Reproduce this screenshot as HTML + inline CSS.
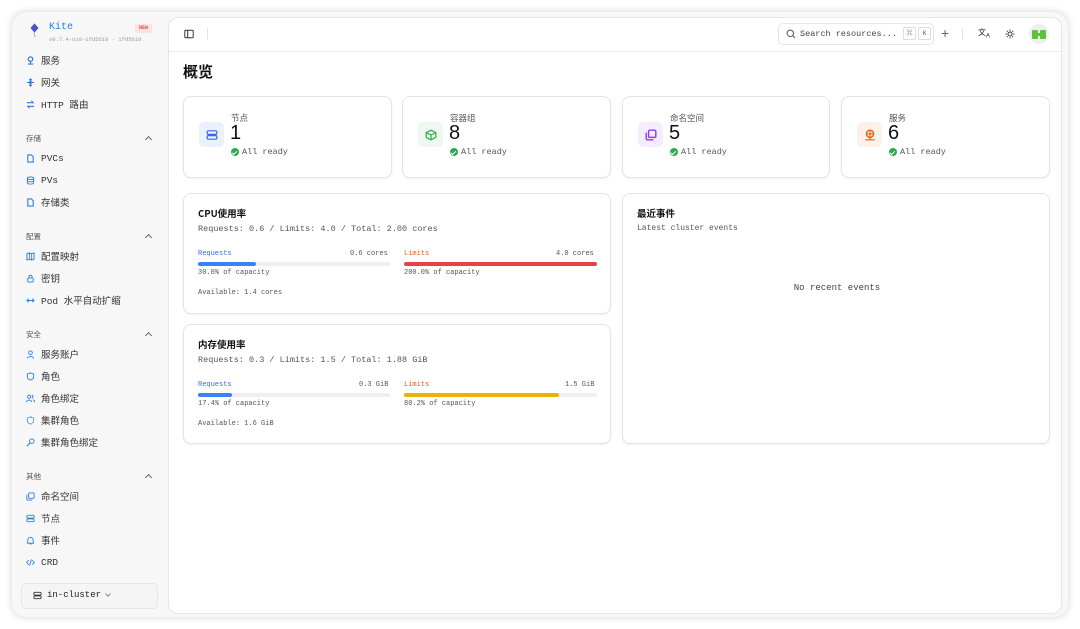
<!DOCTYPE html>
<html><head><meta charset="utf-8"><style>
*{box-sizing:border-box;margin:0;padding:0}
body{width:1080px;height:629px;background:#fff;font-family:"Liberation Mono","Noto Sans CJK SC",monospace;color:#222;position:relative;overflow:hidden}
.frame{position:absolute;left:12px;top:12px;width:1056px;height:605px;background:#f7f7f8;border-radius:14px;box-shadow:0 0 8px rgba(0,0,0,.18)}
.a{position:absolute}
.main{position:absolute;left:168px;top:17px;width:894px;height:597px;background:#fff;border:1px solid #e6e6e8;border-radius:10px}
.nav{position:absolute;left:26px;font-size:9.5px;color:#333;display:flex;align-items:center;height:12px}
.nav svg{width:9px;height:9px;margin-right:6px}
.grp{position:absolute;left:26px;font-size:7.5px;color:#555;width:128px;font-family:"Noto Sans CJK SC",sans-serif}
.grp:after{content:"";position:absolute;right:3px;top:4px;width:4px;height:4px;border-left:1px solid #666;border-top:1px solid #666;transform:rotate(45deg)}
.card{position:absolute;background:#fff;border:1px solid #e4e4e7;border-radius:8px;box-shadow:0 1px 2px rgba(0,0,0,.06)}
.ib{position:absolute;left:15px;top:25px;width:25px;height:25px;border-radius:5px;display:flex;align-items:center;justify-content:center}
.lbl{position:absolute;left:47px;top:15px;font-size:8.5px;color:#555;font-family:"Noto Sans CJK SC",sans-serif}
.num{position:absolute;left:46px;top:25px;font-size:20px;font-family:"Liberation Sans",sans-serif;color:#111}
.ok{position:absolute;left:47px;top:50px;font-size:8.5px;color:#555;display:flex;align-items:center}
.ok i{width:8px;height:8px;border-radius:50%;background:#2fa84f;margin-right:3px;display:inline-block;position:relative}
.ok i:after{content:"";position:absolute;left:2.3px;top:1.5px;width:2px;height:3.5px;border:solid #fff;border-width:0 1px 1px 0;transform:rotate(45deg)}
.t{font-size:9.5px;font-weight:bold;font-family:"Noto Sans CJK SC",sans-serif;color:#111}
.s{font-size:8.5px;color:#555}
.sm{font-size:7px;color:#555}
.bar{position:absolute;height:4px;border-radius:2px;background:#efeff1}
</style></head><body>
<div class="frame"></div>
<svg class="a" style="left:28px;top:23px" width="13" height="15" viewBox="0 0 13 15"><path d="M6.5 1L10 5 6.5 9 3 5Z" fill="#3a5bd9" stroke="#5a4fc8" stroke-width=".8"/><path d="M6.5 9 Q5 12 8 14" stroke="#888" stroke-width=".6" fill="none"/></svg>
<div class="a" style="left:49px;top:22px;font-size:10px;color:#2b7de0">Kite</div>
<div class="a" style="left:49px;top:36px;font-size:5.5px;color:#999">v0.7.4-o10-1fd5610 · 1fd5610</div>
<div class="a" style="left:135px;top:24px;width:17px;height:9px;background:#fde2e2;color:#e25050;font-size:5px;border-radius:2px;text-align:center;line-height:9px;font-weight:bold">NEW</div>

<div class="nav" style="top:54px"><svg viewBox="0 0 10 10"><circle cx="5" cy="3.5" r="2.5" fill="none" stroke="#2b7de0" stroke-width="1.4"/><path d="M5 6v3M2 9h6" stroke="#2b7de0" stroke-width="1.2"/></svg>服务</div>
<div class="nav" style="top:76px"><svg viewBox="0 0 10 10"><path d="M5 1v8M1 5h8M3.5 2.5L5 1l1.5 1.5M3.5 7.5L5 9l1.5-1.5" stroke="#2b7de0" stroke-width="1.2" fill="none"/><circle cx="5" cy="5" r="1.6" fill="#2b7de0"/></svg>网关</div>
<div class="nav" style="top:98px"><svg viewBox="0 0 10 10"><path d="M1 3h7l-2-2M9 7H2l2 2" stroke="#2b7de0" stroke-width="1.2" fill="none"/></svg>HTTP 路由</div>
<div class="grp" style="top:133px">存储</div>
<div class="nav" style="top:152px"><svg viewBox="0 0 10 10"><path d="M2 1h4l2 2v6H2Z" stroke="#2b7de0" stroke-width="1.2" fill="none"/></svg>PVCs</div>
<div class="nav" style="top:174px"><svg viewBox="0 0 10 10"><ellipse cx="5" cy="2.5" rx="3.5" ry="1.5" stroke="#2b7de0" fill="none"/><path d="M1.5 2.5v5c0 2 7 2 7 0v-5M1.5 5c0 2 7 2 7 0" stroke="#2b7de0" fill="none"/></svg>PVs</div>
<div class="nav" style="top:196px"><svg viewBox="0 0 10 10"><path d="M2 1h4l2 2v6H2Z" stroke="#2b7de0" stroke-width="1.2" fill="none"/></svg>存储类</div>
<div class="grp" style="top:231px">配置</div>
<div class="nav" style="top:250px"><svg viewBox="0 0 10 10"><path d="M1 2l2.7-1 2.6 1 2.7-1v7l-2.7 1-2.6-1L1 9ZM3.7 1v7M6.3 2v7" stroke="#2b7de0" fill="none"/></svg>配置映射</div>
<div class="nav" style="top:272px"><svg viewBox="0 0 10 10"><rect x="2" y="4.5" width="6" height="4.5" rx="1" stroke="#2b7de0" fill="none"/><path d="M3.3 4.5V3a1.7 1.7 0 0 1 3.4 0v1.5" stroke="#2b7de0" fill="none"/></svg>密钥</div>
<div class="nav" style="top:294px"><svg viewBox="0 0 10 10"><path d="M1 5h8M3 3L1 5l2 2M7 3l2 2-2 2" stroke="#2b7de0" fill="none"/></svg>Pod 水平自动扩缩</div>
<div class="grp" style="top:329px">安全</div>
<div class="nav" style="top:348px"><svg viewBox="0 0 10 10"><circle cx="5" cy="3" r="2" stroke="#2b7de0" fill="none"/><path d="M1.5 9.5c0-3 7-3 7 0" stroke="#2b7de0" fill="none"/></svg>服务账户</div>
<div class="nav" style="top:370px"><svg viewBox="0 0 10 10"><path d="M5 1l3.5 1.3v3c0 2-1.8 3.2-3.5 3.7C3.3 8.5 1.5 7.3 1.5 5.3v-3Z" stroke="#2b7de0" fill="none"/></svg>角色</div>
<div class="nav" style="top:392px"><svg viewBox="0 0 10 10"><circle cx="3.5" cy="3" r="1.8" stroke="#2b7de0" fill="none"/><path d="M0.5 9c0-3 6-3 6 0M6.5 1.3a1.8 1.8 0 0 1 0 3.4M8 6.3c1 .5 1.5 1.5 1.5 2.7" stroke="#2b7de0" fill="none"/></svg>角色绑定</div>
<div class="nav" style="top:414px"><svg viewBox="0 0 10 10"><path d="M5 1l3.5 1.3v3c0 2-1.8 3.2-3.5 3.7C3.3 8.5 1.5 7.3 1.5 5.3v-3Z" stroke="#2b7de0" fill="none" stroke-dasharray="2 .6"/></svg>集群角色</div>
<div class="nav" style="top:436px"><svg viewBox="0 0 10 10"><circle cx="6.5" cy="3.5" r="2.5" stroke="#2b7de0" fill="none"/><path d="M4.7 5.3L1 9" stroke="#2b7de0" stroke-width="1.2"/></svg>集群角色绑定</div>
<div class="grp" style="top:471px">其他</div>
<div class="nav" style="top:490px"><svg viewBox="0 0 10 10"><rect x="3" y="1" width="6" height="6" rx="1" stroke="#2b7de0" fill="none"/><path d="M1 3v5a1 1 0 0 0 1 1h5" stroke="#2b7de0" fill="none"/></svg>命名空间</div>
<div class="nav" style="top:512px"><svg viewBox="0 0 10 10"><rect x="1" y="1.5" width="8" height="3" rx="1" stroke="#2b7de0" fill="none"/><rect x="1" y="5.5" width="8" height="3" rx="1" stroke="#2b7de0" fill="none"/></svg>节点</div>
<div class="nav" style="top:534px"><svg viewBox="0 0 10 10"><path d="M2 7.5V4.5a3 3 0 0 1 6 0v3l1 .5H1ZM4 9h2" stroke="#2b7de0" fill="none"/></svg>事件</div>
<div class="nav" style="top:556px"><svg viewBox="0 0 10 10"><path d="M3 2.5L.8 5 3 7.5M7 2.5L9.2 5 7 7.5M6 1.5L4 8.5" stroke="#2b7de0" fill="none"/></svg>CRD</div>
<div class="a" style="left:21px;top:583px;width:137px;height:26px;border:1px solid #e6e6e8;border-radius:5px;background:#f5f5f6"></div>
<svg class="a" style="left:33px;top:591px" width="9" height="9" viewBox="0 0 10 10"><rect x="1" y="1.5" width="8" height="3" rx="1" stroke="#333" fill="none"/><rect x="1" y="5.5" width="8" height="3" rx="1" stroke="#333" fill="none"/></svg>
<div class="a" style="left:47px;top:590px;font-size:9px;color:#222">in-cluster</div>
<div class="a" style="left:106px;top:592px;width:4px;height:4px;border-right:1px solid #888;border-bottom:1px solid #888;transform:rotate(45deg)"></div>

<div class="main"></div>
<div class="a" style="left:169px;top:51px;width:892px;height:1px;background:#ededef"></div>
<svg class="a" style="left:184px;top:29px" width="10" height="10" viewBox="0 0 10 10"><rect x=".8" y="1.3" width="8.4" height="7.4" rx="1" stroke="#333" fill="none"/><path d="M3.7 1.3v7.4" stroke="#333"/></svg>
<div class="a" style="left:207px;top:28px;width:1px;height:12px;background:#e3e3e5"></div>
<div class="a" style="left:778px;top:23px;width:156px;height:22px;border:1px solid #e6e6e8;border-radius:5px"></div>
<svg class="a" style="left:786px;top:29px" width="10" height="10" viewBox="0 0 10 10"><circle cx="4.3" cy="4.3" r="3.2" stroke="#555" fill="none"/><path d="M6.6 6.6L9 9" stroke="#555"/></svg>
<div class="a" style="left:800px;top:29px;font-size:8.5px;color:#444">Search resources...</div>
<div class="a" style="left:903px;top:27px;width:13px;height:13px;border:1px solid #ddd;border-radius:2px;font-size:6px;text-align:center;line-height:12px;color:#555">⌘</div>
<div class="a" style="left:918px;top:27px;width:13px;height:13px;border:1px solid #ddd;border-radius:2px;font-size:6px;text-align:center;line-height:12px;color:#555">K</div>
<div class="a" style="left:941px;top:25px;font-size:14px;color:#666;font-family:'Liberation Sans'">+</div>
<div class="a" style="left:962px;top:28px;width:1px;height:12px;background:#e3e3e5"></div>
<div class="a" style="left:978px;top:27px;font-size:8px;color:#222;font-family:'Liberation Sans'">文<sub style="font-size:6px">A</sub></div>
<svg class="a" style="left:1005px;top:29px" width="10" height="10" viewBox="0 0 10 10"><circle cx="5" cy="5" r="2" stroke="#333" fill="none"/><path d="M5 .5v1.3M5 8.2v1.3M.5 5h1.3M8.2 5h1.3M1.8 1.8l.9.9M7.3 7.3l.9.9M1.8 8.2l.9-.9M7.3 2.7l.9-.9" stroke="#333"/></svg>
<div class="a" style="left:1029px;top:24px;width:20px;height:20px;border-radius:50%;background:#eee;overflow:hidden"><div class="a" style="left:3px;top:6px;width:6px;height:9px;background:#5fc13b;border-radius:1px"></div><div class="a" style="left:11px;top:6px;width:6px;height:9px;background:#5fc13b;border-radius:1px"></div><div class="a" style="left:6px;top:9px;width:8px;height:3px;background:#5fc13b"></div></div>

<div class="a" style="left:183px;top:61px;font-size:15px;font-weight:bold;font-family:'Noto Sans CJK SC',sans-serif;color:#111">概览</div>

<div class="card" style="left:183px;top:96px;width:209px;height:82px"><div class="ib" style="background:#eaf1fd"><svg width="12" height="12" viewBox="0 0 10 10"><rect x="1" y="1.5" width="8" height="3" rx="1" stroke="#3b6be0" fill="none"/><rect x="1" y="5.5" width="8" height="3" rx="1" stroke="#3b6be0" fill="none"/></svg></div><div class="lbl">节点</div><div class="num">1</div><div class="ok"><i></i>All ready</div></div>
<div class="card" style="left:402px;top:96px;width:209px;height:82px"><div class="ib" style="background:#eef8ef"><svg width="12" height="12" viewBox="0 0 10 10"><path d="M5 1l4 2v4L5 9 1 7V3ZM1 3l4 2 4-2M5 5v4" stroke="#2fa84f" fill="none"/></svg></div><div class="lbl">容器组</div><div class="num">8</div><div class="ok"><i></i>All ready</div></div>
<div class="card" style="left:622px;top:96px;width:208px;height:82px"><div class="ib" style="background:#f5edfd"><svg width="12" height="12" viewBox="0 0 10 10"><rect x="3" y="1" width="6" height="6" rx="1" stroke="#9b3de0" stroke-width="1.2" fill="none"/><path d="M1 3v5a1 1 0 0 0 1 1h5" stroke="#9b3de0" stroke-width="1.2" fill="none"/></svg></div><div class="lbl">命名空间</div><div class="num">5</div><div class="ok"><i></i>All ready</div></div>
<div class="card" style="left:841px;top:96px;width:209px;height:82px"><div class="ib" style="background:#fdf1e7"><svg width="12" height="12" viewBox="0 0 10 10"><circle cx="5" cy="4" r="3" stroke="#e8651a" stroke-width="1.2" fill="none"/><path d="M2 4h6M5 1v6M5 7v2M1 9h8" stroke="#e8651a"/></svg></div><div class="lbl">服务</div><div class="num">6</div><div class="ok"><i></i>All ready</div></div>

<div class="card" style="left:183px;top:193px;width:428px;height:121px">
<div class="a t" style="left:14px;top:12px">CPU使用率</div>
<div class="a s" style="left:14px;top:30px">Requests: 0.6 / Limits: 4.0 / Total: 2.00 cores</div>
<div class="a sm" style="left:14px;top:56px;color:#3b6be0">Requests</div><div class="a sm" style="left:166px;top:56px">0.6 cores</div>
<div class="bar" style="left:14px;top:68px;width:192px"></div><div class="bar" style="left:14px;top:68px;width:58px;background:#3b82f6"></div>
<div class="a sm" style="left:14px;top:75px">30.0% of capacity</div>
<div class="a sm" style="left:220px;top:56px;color:#ea580c">Limits</div><div class="a sm" style="left:372px;top:56px">4.0 cores</div>
<div class="bar" style="left:220px;top:68px;width:193px;background:#e54444"></div>
<div class="a sm" style="left:220px;top:75px">200.0% of capacity</div>
<div class="a sm" style="left:14px;top:95px">Available: 1.4 cores</div>
</div>
<div class="card" style="left:183px;top:324px;width:428px;height:120px">
<div class="a t" style="left:14px;top:12px">内存使用率</div>
<div class="a s" style="left:14px;top:30px">Requests: 0.3 / Limits: 1.5 / Total: 1.88 GiB</div>
<div class="a sm" style="left:14px;top:56px;color:#3b6be0">Requests</div><div class="a sm" style="left:175px;top:56px">0.3 GiB</div>
<div class="bar" style="left:14px;top:68px;width:192px"></div><div class="bar" style="left:14px;top:68px;width:34px;background:#3b82f6"></div>
<div class="a sm" style="left:14px;top:75px">17.4% of capacity</div>
<div class="a sm" style="left:220px;top:56px;color:#ea580c">Limits</div><div class="a sm" style="left:381px;top:56px">1.5 GiB</div>
<div class="bar" style="left:220px;top:68px;width:193px"></div><div class="bar" style="left:220px;top:68px;width:155px;background:#eab308"></div>
<div class="a sm" style="left:220px;top:75px">80.2% of capacity</div>
<div class="a sm" style="left:14px;top:95px">Available: 1.6 GiB</div>
</div>
<div class="card" style="left:622px;top:193px;width:428px;height:251px">
<div class="a t" style="left:14px;top:12px">最近事件</div>
<div class="a" style="left:14px;top:30px;font-size:8px;color:#555">Latest cluster events</div>
<div class="a" style="left:0;width:428px;top:89px;text-align:center;font-size:9px;color:#444">No recent events</div>
</div>
</body></html>
